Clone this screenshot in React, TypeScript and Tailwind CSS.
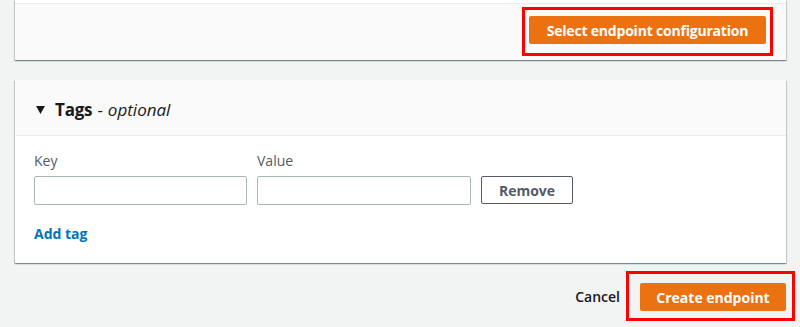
import React from 'react';

const panelShadow =
  'shadow-[0_1px_1px_0_rgba(0,28,36,0.3),1px_1px_1px_0_rgba(0,28,36,0.15),-1px_1px_1px_0_rgba(0,28,36,0.15)]';

const TagRow: React.FC = () => (
  <div className="flex items-end gap-[10px]">
    <div className="flex flex-col">
      <label className="text-[14px] leading-[20px] text-[#545b64] mb-[5px]">Key</label>
      <input className="w-[213px] h-[29px] border border-[#aab7b8] rounded-[2px] bg-white" />
    </div>
    <div className="flex flex-col">
      <label className="text-[14px] leading-[20px] text-[#545b64] mb-[5px]">Value</label>
      <input className="w-[214px] h-[29px] border border-[#aab7b8] rounded-[2px] bg-white" />
    </div>
    <button className="w-[92px] h-[28px] mb-[1px] border border-[#545b64] rounded-[2px] bg-white text-[14px] font-bold text-[#545b64]">
      Remove
    </button>
  </div>
);

const App: React.FC = () => {
  return (
    <div className="w-[800px] h-[327px] overflow-hidden bg-[#f2f3f3] font-['Open_Sans',sans-serif] text-[#16191f]">
      {/* previous panel footer */}
      <div className={`ml-[15px] w-[771px] bg-white ${panelShadow}`}>
        <div className="h-[3px]" />
        <div className="h-[57px] bg-[#fafafa] border-t border-[#eaeded] flex justify-end items-start pr-[13px] pt-[3px]">
          <div className="border-[3px] border-[#ff0000] px-[4px] pt-[6px] pb-[9px]">
            <button className="h-[28px] w-[237px] rounded-[2px] bg-[#ec7211] text-white text-[14px] font-bold tracking-[-0.2px]">
              Select endpoint configuration
            </button>
          </div>
        </div>
      </div>

      {/* Tags panel */}
      <div className={`ml-[15px] mt-[20px] w-[771px] bg-white ${panelShadow}`}>
        <div className="h-[56px] bg-[#fafafa] border-b border-[#eaeded] flex items-center pl-[21px] pt-[3px]">
          <svg width="9" height="8" viewBox="0 0 10 9" className="mr-[10px] mt-[1px]">
            <path d="M0 0 H10 L5 9 Z" fill="#16191f" />
          </svg>
          <span className="text-[17px] font-bold leading-none tracking-[-0.2px]">Tags</span>
          <span className="text-[17px] leading-none ml-[5px]">-</span>
          <span className="text-[17px] italic leading-none ml-[5px]">optional</span>
        </div>
        <div className="pl-[19px] pt-[15px] pb-[18px]">
          <TagRow />
          <div className="mt-[16px]">
            <a className="text-[14px] font-bold text-[#0073bb] leading-[20px]">Add tag</a>
          </div>
        </div>
      </div>

      {/* form actions */}
      <div className="flex justify-end items-center mt-[8px] pr-[5px]">
        <button className="text-[14px] font-semibold text-[#16191f] mr-[6px]">Cancel</button>
        <div className="border-[3px] border-[#ff0000] pl-[11px] pr-[6px] pt-[9px] pb-[7px]">
          <button className="h-[28px] w-[146px] rounded-[2px] bg-[#ec7211] text-white text-[14px] font-bold">
            Create endpoint
          </button>
        </div>
      </div>
    </div>
  );
};

export default App;
